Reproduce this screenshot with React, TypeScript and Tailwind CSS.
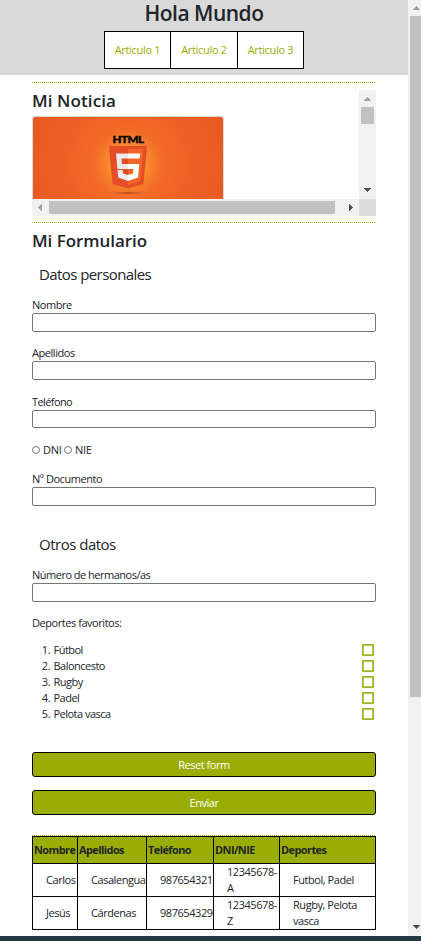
import type { ReactNode } from 'react';

const sports = ['Fútbol', 'Baloncesto', 'Rugby', 'Padel', 'Pelota vasca'];

const headers = ['Nombre', 'Apellidos', 'Teléfono', 'DNI/NIE', 'Deportes'];

const rows = [
  ['Carlos', 'Casalengua', '987654321', '12345678-A', 'Futbol, Padel'],
  ['Jesús', 'Cárdenas', '987654329', '12345678-Z', 'Rugby, Pelota vasca'],
];

function Field({ label, className, inputHeight = 'h-[19px]' }: { label: string; className: string; inputHeight?: string }) {
  return (
    <label className={'block ' + className}>
      <span className="block h-4 leading-4">{label}</span>
      <input className={'block w-full rounded-[2px] border border-[#767676] bg-white px-1 outline-none ' + inputHeight} />
    </label>
  );
}

function Arrow({ dir, color }: { dir: 'up' | 'down' | 'left' | 'right'; color: string }) {
  const d = {
    up: 'M3 0h1v1h1v1h1v1h1v1H0V3h1V2h1V1h1z',
    down: 'M0 0h7v1H6v1H5v1H4v1H3V3H2V2H1V1H0z',
    left: 'M4 0v7H3V6H2V5H1V4H0V3h1V2h1V1h1V0z',
    right: 'M0 0h1v1h1v1h1v1h1v1H3v1H2v1H1v1H0z',
  }[dir];
  const vertical = dir === 'up' || dir === 'down';
  return (
    <svg width={vertical ? 7 : 4} height={vertical ? 4 : 7} className="block shrink-0" shapeRendering="crispEdges">
      <path d={d} fill={color} />
    </svg>
  );
}

function Dotted() {
  return <div className="h-px bg-[repeating-linear-gradient(90deg,#9aad04_0_1px,#ffffff_1px_2px)]" />;
}

function Button({ children, className }: { children: ReactNode; className: string }) {
  return (
    <button className={'block h-[25px] w-full rounded-[3px] border border-black bg-[#9aad04] text-center leading-[23px] text-white ' + className}>
      {children}
    </button>
  );
}

function HtmlPicture() {
  return (
    <svg width="192" height="107" viewBox="0 0 192 107" className="block">
      <defs>
        <radialGradient id="glow" gradientUnits="userSpaceOnUse" cx="95" cy="47" r="95">
          <stop offset="0" stopColor="#fbb040" />
          <stop offset="0.2" stopColor="#f98a30" />
          <stop offset="0.36" stopColor="#f36a28" />
          <stop offset="0.65" stopColor="#f06026" />
          <stop offset="1" stopColor="#ea5b24" />
        </radialGradient>
        <radialGradient id="shade">
          <stop offset="0" stopColor="#a83c10" stopOpacity="0.8" />
          <stop offset="1" stopColor="#a83c10" stopOpacity="0" />
        </radialGradient>
      </defs>
      <rect width="192" height="107" fill="url(#glow)" />
      <text x="79.5" y="25.5" fontSize="10.2" fontWeight="900" fontFamily="Lato, sans-serif" textLength="31" lengthAdjust="spacingAndGlyphs" fill="#080808" stroke="#080808" strokeWidth="0.4">HTML</text>
      <ellipse cx="95" cy="76" rx="15" ry="1.8" fill="url(#shade)" />
      <g transform="translate(-1 -0.5)">
        <path d="M77 29.500H115L111.500 67.500L96 72L80.500 67.500Z" fill="#e44d26" />
        <path d="M96 32.500H111.500L108.500 64.700L96 69Z" fill="#f16529" />
        <path d="M96 37H84L85.400 52.500H96V47.500H90L89.500 42H96ZM96 58.500L91 57L90.700 53.500H85.500L86.200 61L96 64.500Z" fill="#ebebeb" />
        <path d="M96 37H108.300L107.800 42H96ZM96 47.500H107.300L106 61L96 64.500V58.500L101 57L101.500 52.500H96Z" fill="#ffffff" />
      </g>
    </svg>
  );
}

export default function App() {
  return (
    <div className="flex h-[941px] w-[421px] flex-col overflow-hidden bg-white font-['Open_Sans','Noto_Sans',sans-serif] text-[11px] tracking-[-0.45px] text-[#212529]">
      <div className="flex h-[936px]">
        <div className="w-[408px]">
          <header className="flex h-[75px] flex-col items-center bg-[#d9d9d9]">
            <h1 className="h-[31px] text-[21px] leading-[26px] font-semibold tracking-[-0.5px] whitespace-nowrap">Hola Mundo</h1>
            <nav className="flex h-[38px] w-[200px] border border-black bg-white text-center leading-[36px] tracking-[-0.3px] text-[#9aad04]">
              <a className="w-[66px] border-r border-black">Articulo 1</a>
              <a className="w-[67px] border-r border-black">Articulo 2</a>
              <a className="w-[65px]">Articulo 3</a>
            </nav>
          </header>

          <main className="px-8 pt-[7px]">
            <Dotted />
            <section className="mt-[7px] mb-[6px] h-[126px]">
              <div className="flex h-[109px]">
                <div className="w-[327px] overflow-hidden">
                  <h2 className="h-[26px] text-[17px] leading-[22px] font-semibold tracking-[0.1px]">Mi Noticia</h2>
                  <div className="h-[120px] w-[192px] overflow-hidden rounded-[3px] border border-[#d9d9d9]">
                    <HtmlPicture />
                  </div>
                </div>
                <div className="flex w-[17px] flex-col items-center justify-between bg-[#f1f1f1] pt-[7px] pb-[7px]">
                  <div className="flex flex-col items-center gap-[6px]">
                    <Arrow dir="up" color="#a3a3a3" />
                    <div className="h-[17px] w-[13px] bg-[#c1c1c1]" />
                  </div>
                  <Arrow dir="down" color="#505050" />
                </div>
              </div>
              <div className="flex h-[17px]">
                <div className="flex w-[327px] items-center bg-[#f1f1f1] pr-[6px] pl-[6px]">
                  <Arrow dir="left" color="#a3a3a3" />
                  <div className="ml-[7px] h-[13px] w-[286px] bg-[#c1c1c1]" />
                  <div className="ml-auto">
                    <Arrow dir="right" color="#505050" />
                  </div>
                </div>
                <div className="w-[17px] bg-[#dcdcdc]" />
              </div>
            </section>
            <Dotted />

            <form>
              <h2 className="h-[36px] text-[17px] leading-[36px] font-semibold tracking-[-0.05px]">Mi Formulario</h2>
              <h3 className="h-[32px] pl-[7px] text-[15px] leading-[30px] tracking-[-0.58px]">Datos personales</h3>
              <Field label="Nombre" className="mt-[6px]" />
              <Field label="Apellidos" className="mt-[13px]" />
              <Field label="Teléfono" className="mt-[14px] tracking-[-0.6px]" inputHeight="h-[18px]" />
              <div className="mt-[14px] flex h-4 items-center leading-4">
                <span className="mr-[3px] size-2 rounded-full border border-[#767676]" />
                <span className="w-[18px] tracking-[-0.3px]">DNI</span>
                <span className="mr-[3px] ml-[3px] size-2 rounded-full border border-[#767676]" />
                <span className="tracking-[-0.3px]">NIE</span>
              </div>
              <Field label="Nº Documento" className="mt-[13px]" />
              <h3 className="mt-[23px] h-[32px] pl-[7px] text-[15px] leading-[30px] tracking-[-0.5px]">Otros datos</h3>
              <Field label="Número de hermanos/as" className="mt-[6px] tracking-[-0.5px]" />
              <p className="mt-[13px] h-4 leading-4 tracking-[-0.45px]">Deportes favoritos:</p>
              <ol className="mt-[11px]">
                {sports.map((s, i) => (
                  <li key={s} className="flex h-4 items-center pr-[2px] leading-4 tracking-[-0.52px]">
                    <span className="w-[18px] text-right">{i + 1}.</span>
                    <span className="ml-[3.5px]">{s}</span>
                    <span className="ml-auto size-3 border border-[#a1b31b] bg-[#b7c54f] p-px">
                      <span className="block size-2 bg-white" />
                    </span>
                  </li>
                ))}
              </ol>
              <Button className="mt-[30px] tracking-[-0.45px]">Reset form</Button>
              <Button className="mt-[13px] tracking-[-0.45px]">Enviar</Button>
            </form>

            <div className="mt-5">
              <Dotted />
              <div className="grid grid-cols-[45px_69px_67px_66px_96px] grid-rows-[27px_33px_33px] border-t border-l border-black">
                {headers.map((h) => (
                  <div key={h} className="border-r border-b border-black bg-[#9aad04] pl-px leading-[26px] font-bold tracking-[-0.6px] whitespace-nowrap">
                    {h}
                  </div>
                ))}
                {rows.flat().map((c, i) => (
                  <div key={i} className="flex items-center border-r border-b border-black pl-[13px] leading-4 tracking-[-0.45px]">
                    <span>{c}</span>
                  </div>
                ))}
              </div>
            </div>
          </main>
        </div>

        <div className="flex w-[13px] flex-col justify-between bg-[#f1f1f1] pt-[6px] pb-[7px] pl-[2px]">
          <div>
            <div className="pl-[3px]">
              <Arrow dir="up" color="#a3a3a3" />
            </div>
            <div className="mt-[6px] h-[681px] bg-[#c1c1c1]" />
          </div>
          <div className="pl-[3px]">
            <Arrow dir="down" color="#505050" />
          </div>
        </div>
      </div>
      <footer className="h-[5px] bg-[#233942]" />
    </div>
  );
}
